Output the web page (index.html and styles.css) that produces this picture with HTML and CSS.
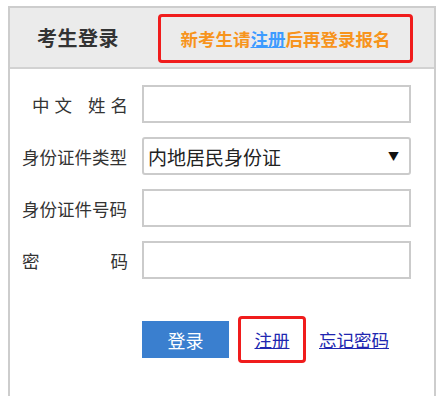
FILE: index.html
```html
<!DOCTYPE html>
<html lang="zh-CN">
<head>
<meta charset="utf-8">
<title>考生登录</title>
<link rel="stylesheet" href="styles.css">
</head>
<body>
<div class="panel">
  <div class="panel-head">
    <h2 class="title">考生登录</h2>
    <div class="notice">新考生请<a class="notice-link" href="#">注册</a>后再登录报名</div>
  </div>
  <form class="form">
    <div class="row">
      <label class="label label-name"><span>中</span><span>文</span><span class="gap">姓</span><span>名</span></label>
      <input class="field" type="text">
    </div>
    <div class="row">
      <label class="label">身份证件类型</label>
      <div class="select">
        <span class="select-text">内地居民身份证</span>
        <span class="select-arrow">▼</span>
      </div>
    </div>
    <div class="row">
      <label class="label">身份证件号码</label>
      <input class="field" type="text">
    </div>
    <div class="row">
      <label class="label label-pwd"><span>密</span><span>码</span></label>
      <input class="field" type="password">
    </div>
    <div class="actions">
      <button class="btn" type="button">登录</button>
      <a class="reg" href="#">注册</a>
      <a class="forgot" href="#">忘记密码</a>
    </div>
  </form>
</div>
</body>
</html>
```

FILE: styles.css
```css
* { box-sizing: border-box; }
html, body {
  margin: 0;
  padding: 0;
  background: #fff;
  font-family: "Noto Sans CJK SC", "Microsoft YaHei", sans-serif;
}
.panel {
  margin: 6px 0 0 8px;
  width: 428px;
  height: 390px;
  border: 2px solid #cdcdcd;
  border-bottom: none;
}
.panel-head {
  height: 61px;
  background: #ebebeb;
  border-bottom: 2px solid #d2d2d2;
  display: flex;
  align-items: center;
  padding-left: 27px;
}
.title {
  margin: 0;
  font-size: 20px;
  font-weight: bold;
  color: #333;
  letter-spacing: 0.5px;
  width: 121px;
}
.notice {
  width: 255px;
  height: 49px;
  margin-top: 2px;
  border: 3px solid #f01c1c;
  border-radius: 4px;
  display: flex;
  align-items: center;
  justify-content: center;
  font-size: 17.5px;
  font-weight: bold;
  color: #f7941d;
}
.notice-link {
  color: #3d9bff;
  text-decoration: underline;
}
.form {
  padding: 16px 0 0 12px;
}
.row {
  display: flex;
  align-items: center;
  height: 38px;
  margin-bottom: 14px;
}
.label {
  width: 106px;
  margin-right: 14px;
  font-size: 17.5px;
  color: #333;
  white-space: nowrap;
}
.label-name {
  display: flex;
  justify-content: flex-end;
  gap: 5px;
}
.label-name .gap {
  margin-left: 11px;
}
.label-pwd {
  display: flex;
  justify-content: space-between;
}
.field {
  width: 269px;
  height: 38px;
  border: 2px solid #cbcbcb;
  background: #fff;
  margin: 0;
  padding: 0 6px;
}
.select {
  width: 269px;
  height: 38px;
  border: 2px solid #cbcbcb;
  border-radius: 3px;
  display: flex;
  align-items: center;
  justify-content: space-between;
  padding: 0 10px 0 4px;
}
.select-text {
  font-size: 19px;
  color: #222;
}
.select-arrow {
  font-size: 11px;
  color: #111;
}
.actions {
  display: flex;
  align-items: center;
  padding-left: 120px;
  margin-top: 37px;
}
.btn {
  width: 87px;
  height: 37px;
  border: none;
  background: #3a7fcf;
  color: #fff;
  font-family: inherit;
  font-size: 18px;
  padding: 0;
  margin-right: 9px;
}
.reg {
  width: 68px;
  height: 47px;
  border: 3px solid #f01c1c;
  border-radius: 4px;
  display: flex;
  align-items: center;
  justify-content: center;
  font-size: 17.5px;
  color: #2026b0;
  margin-right: 13px;
}
.forgot {
  font-size: 17.5px;
  color: #2026b0;
}
```
